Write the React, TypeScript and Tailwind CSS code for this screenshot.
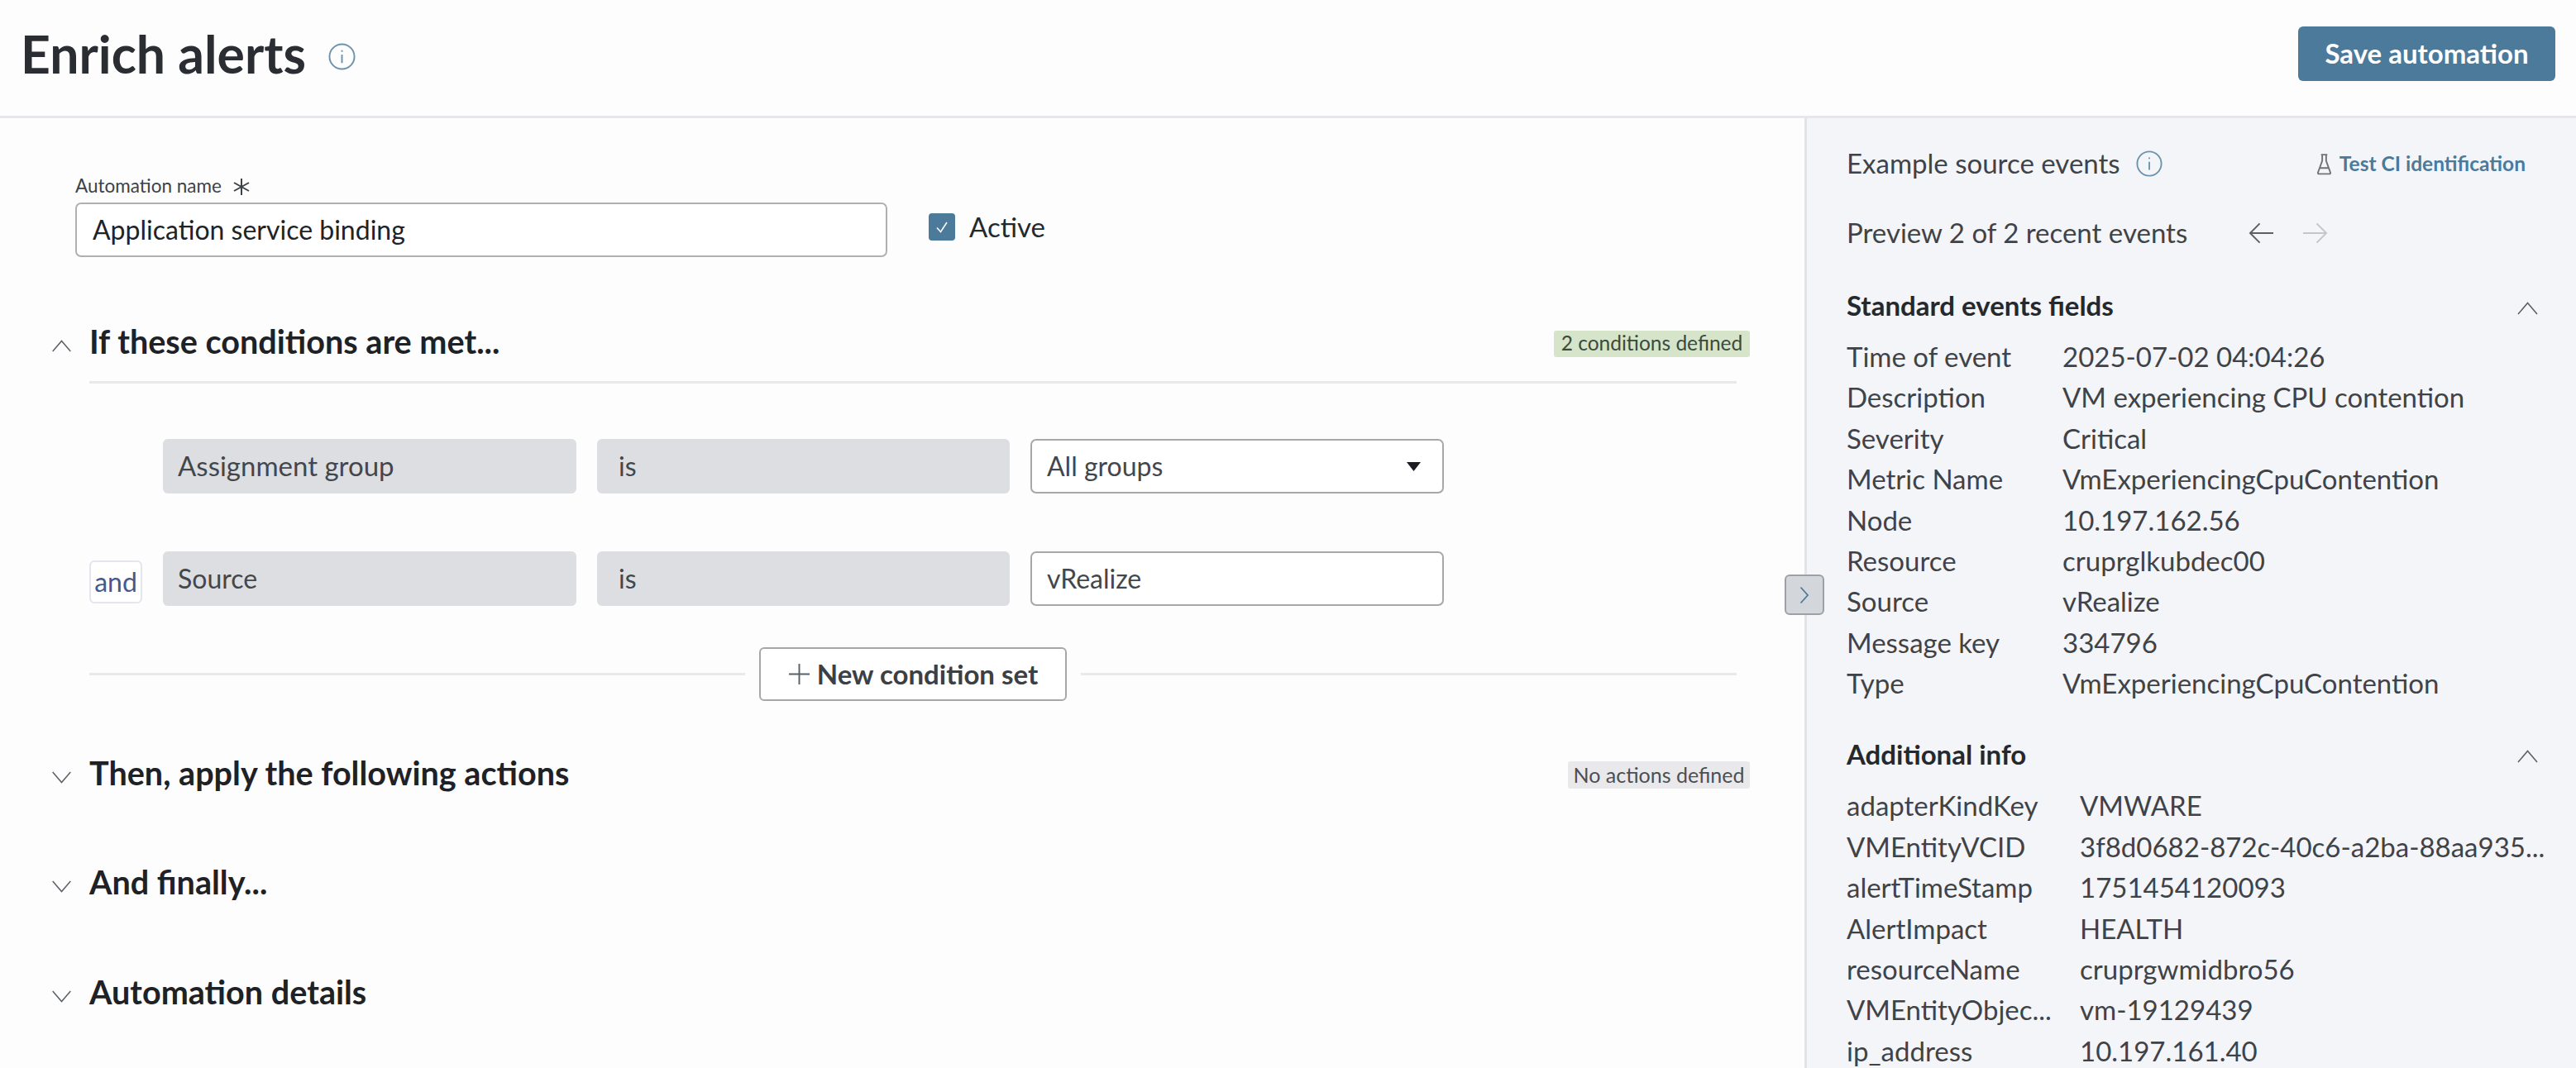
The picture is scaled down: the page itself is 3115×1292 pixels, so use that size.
import React from 'react'

const standardFields = [
  ['Time of event', '2025-07-02 04:04:26'],
  ['Description', 'VM experiencing CPU contention'],
  ['Severity', 'Critical'],
  ['Metric Name', 'VmExperiencingCpuContention'],
  ['Node', '10.197.162.56'],
  ['Resource', 'cruprglkubdec00'],
  ['Source', 'vRealize'],
  ['Message key', '334796'],
  ['Type', 'VmExperiencingCpuContention'],
]

const additionalInfo = [
  ['adapterKindKey', 'VMWARE'],
  ['VMEntityVCID', '3f8d0682-872c-40c6-a2ba-88aa935...'],
  ['alertTimeStamp', '1751454120093'],
  ['AlertImpact', 'HEALTH'],
  ['resourceName', 'cruprgwmidbro56'],
  ['VMEntityObjec...', 'vm-19129439'],
  ['ip_address', '10.197.161.40'],
]

function Chevron({ up, className }: { up?: boolean; className: string }) {
  return (
    <svg viewBox="0 0 26 16" fill="none" stroke="currentColor" strokeWidth="1.6" className={className}>
      <path d={up ? 'M1.5 15 L13 1.5 L24.5 15' : 'M1.5 1 L13 14.5 L24.5 1'} />
    </svg>
  )
}

function InfoIcon({ className }: { className: string }) {
  return (
    <svg viewBox="0 0 34 34" fill="none" stroke="currentColor" strokeWidth="2" className={className}>
      <circle cx="17" cy="17" r="15.5" />
      <path d="M17 14.5 V25" />
      <path d="M17 9 V11" />
    </svg>
  )
}

function SectionHeader({ title, open, badge }: { title: string; open?: boolean; badge?: React.ReactNode }) {
  return (
    <div className="flex h-[60px] items-center">
      <Chevron up={open} className="mt-[10px] h-[15px] w-[25px] text-[#5b6066]" />
      <h2 className="ml-[21px] text-[39.6px] leading-[60px] font-bold text-[#1e2226]">{title}</h2>
      <div className="ml-auto mt-[5px]">{badge}</div>
    </div>
  )
}

function FieldRow({ label, value, valueWidth }: { label: string; value: string; valueWidth: string }) {
  return (
    <div className="flex h-[49.4px] items-center">
      <span className={valueWidth}>{label}</span>
      <span className="whitespace-nowrap">{value}</span>
    </div>
  )
}

function PanelHeading({ title }: { title: string }) {
  return (
    <div className="flex items-center justify-between pr-[45px]">
      <h3 className="text-[33px] leading-[45px] font-bold text-[#25292d]">{title}</h3>
      <Chevron up className="mt-[6px] h-[16px] w-[27px] text-[#5b6066]" />
    </div>
  )
}

export default function App() {
  return (
    <div className="flex h-[1292px] w-[3115px] flex-col overflow-hidden bg-[#fdfdfd] font-[Lato,sans-serif]">
      <header className="flex h-[143px] shrink-0 items-center border-b-[3px] border-[#e6e7ea] pb-[10px] pl-[25px] pr-[25px]">
        <h1 className="text-[62.5px] leading-[80px] font-bold text-[#2a2e33]">Enrich alerts</h1>
        <InfoIcon className="ml-[27px] mt-[6px] h-[33px] w-[33px] text-[#6b93ad]" />
        <button className="ml-auto h-[66px] w-[311px] rounded-[6px] bg-[#4b7a9b] text-[33px] font-bold text-white">
          Save automation
        </button>
      </header>

      <div className="flex min-h-0 flex-1">
        <main className="flex-1 pl-[62px] pr-[66px]">
          <div className="ml-[29px] mt-[68px] flex">
            <div>
              <label className="flex h-[28px] items-center text-[22.5px] leading-[28px] text-[#3d4247]">
                Automation name
                <svg viewBox="0 0 22 22" fill="none" stroke="#3d4247" strokeWidth="2" className="ml-[13px] mt-[2px] h-[22px] w-[22px]">
                  <path d="M11 1 V21 M2 6 L20 16 M20 6 L2 16" />
                </svg>
              </label>
              <div className="mt-[6px] flex h-[66px] w-[982px] items-center rounded-[7px] border-2 border-[#aeb0b4] bg-white pl-[19px] text-[32px] text-[#1d2327]">
                Application service binding
              </div>
            </div>
            <div className="ml-[50px] mt-[47px] flex h-[33px] items-center">
              <span className="flex h-[33px] w-[32px] items-center justify-center rounded-[4px] bg-[#4b7a9b]">
                <svg viewBox="0 0 20 20" fill="none" stroke="white" strokeWidth="1.6" className="h-[20px] w-[20px]">
                  <path d="M4 10.5 L8.5 15.5 L16 4" />
                </svg>
              </span>
              <span className="ml-[17px] text-[33px] text-[#24292d]">Active</span>
            </div>
          </div>

          <div className="mt-[72px]">
            <SectionHeader
              title="If these conditions are met..."
              open
              badge={
                <span className="flex h-[32px] w-[237px] items-center justify-center rounded-[3px] bg-[#d6e4c9] text-[24.5px] text-[#3c4a3c]">
                  2 conditions defined
                </span>
              }
            />
            <div className="ml-[46px] mr-[16px] mt-[18px] border-t-[3px] border-[#e8e9ec]" />
          </div>

          <div className="ml-[46px] mt-[67px] flex flex-col gap-[70px] text-[32px] text-[#43474c]">
            <div className="flex gap-[25px] pl-[89px]">
              <div className="flex h-[66px] w-[500px] items-center rounded-[6px] bg-[#dddee1] pl-[18px] text-[33px]">Assignment group</div>
              <div className="flex h-[66px] w-[499px] items-center rounded-[6px] bg-[#dddee1] pl-[26px]">is</div>
              <div className="flex h-[66px] w-[500px] items-center justify-between rounded-[7px] border-2 border-[#a5a7ab] bg-white pl-[18px] pr-[26px]">
                All groups
                <svg viewBox="0 0 17 11" className="h-[11px] w-[17px]"><path d="M0 0 H17 L8.5 11 Z" fill="#1b1d20" /></svg>
              </div>
            </div>
            <div className="flex h-[66px] items-center gap-[25px]">
              <span className="mt-[8px] flex h-[52px] w-[64px] items-center justify-center rounded-[6px] border-2 border-[#e4e5ee] bg-white text-[32px] text-[#45598f]">and</span>
              <div className="flex h-[66px] w-[500px] items-center rounded-[6px] bg-[#dddee1] pl-[18px]">Source</div>
              <div className="flex h-[66px] w-[499px] items-center rounded-[6px] bg-[#dddee1] pl-[26px]">is</div>
              <div className="flex h-[66px] w-[500px] items-center rounded-[7px] border-2 border-[#a5a7ab] bg-white pl-[18px]">vRealize</div>
            </div>
          </div>

          <div className="ml-[46px] mr-[16px] mt-[50px] flex items-center gap-[17px]">
            <div className="h-[3px] flex-1 bg-[#e8e9ec]" />
            <button className="flex h-[65px] w-[372px] items-center justify-center rounded-[6px] border-2 border-[#a5a7ab] bg-white text-[33px] font-bold text-[#3b4045]">
              <svg viewBox="0 0 28 28" fill="none" stroke="#5b6066" strokeWidth="2" className="mr-[8px] h-[27px] w-[27px]">
                <path d="M14 1 V27 M1 14 H27" />
              </svg>
              New condition set
            </button>
            <div className="h-[3px] flex-1 bg-[#e8e9ec]" />
          </div>

          <div className="mt-[57px]">
            <SectionHeader
              title="Then, apply the following actions"
              badge={
                <span className="flex h-[33px] w-[220px] items-center justify-center rounded-[3px] bg-[#e9e9eb] text-[25px] text-[#4b4f54]">
                  No actions defined
                </span>
              }
            />
          </div>
          <div className="mt-[72px]">
            <SectionHeader title="And finally..." />
          </div>
          <div className="mt-[73px]">
            <SectionHeader title="Automation details" />
          </div>
        </main>

        <aside className="relative w-[933px] shrink-0 border-l-[3px] border-[#e3e4e8] bg-[#f4f5f9] pl-[48px] text-[33px] text-[#3f4347]">
          <button className="absolute left-[-27px] top-[552px] flex h-[49px] w-[48px] items-center justify-center rounded-[6px] border-2 border-[#9da1a7] bg-[#d3d6db]">
            <svg viewBox="0 0 12 22" fill="none" stroke="#4b7a9b" strokeWidth="1.8" className="h-[22px] w-[12px]">
              <path d="M1.5 1.5 L10 11 L1.5 20.5" />
            </svg>
          </button>

          <div className="mt-[35px] flex h-[40px] items-center pr-[61px]">
            <span>Example source events</span>
            <InfoIcon className="ml-[19px] h-[32px] w-[32px] text-[#6b93ad]" />
            <span className="ml-auto flex items-center text-[24.5px] font-bold text-[#4b7a9b]">
              <svg viewBox="0 0 20 28" fill="none" stroke="#6d7378" strokeWidth="2" className="mr-[9px] h-[27px] w-[19px]">
                <path d="M6 2 H14 M7.5 2 V10 L2 25 Q1.8 26.5 3.5 26.5 H16.5 Q18.2 26.5 18 25 L12.5 10 V2 M4 19 H16" />
              </svg>
              Test CI identification
            </span>
          </div>

          <div className="mt-[44px] flex h-[40px] items-center">
            <span>Preview 2 of 2 recent events</span>
            <svg viewBox="0 0 32 28" fill="none" stroke="#5b6066" strokeWidth="2" className="ml-[74px] h-[28px] w-[31px]">
              <path d="M31 14 H2 M14 2 L2 14 L14 26" />
            </svg>
            <svg viewBox="0 0 32 28" fill="none" stroke="#c4c6ca" strokeWidth="2" className="ml-[34px] h-[28px] w-[31px]">
              <path d="M1 14 H30 M18 2 L30 14 L18 26" />
            </svg>
          </div>

          <div className="mt-[45px]">
            <PanelHeading title="Standard events fields" />
          </div>
          <div className="mt-[15px]">
            {standardFields.map(([label, value]) => (
              <FieldRow key={label} label={label} value={value} valueWidth="w-[261px]" />
            ))}
          </div>

          <div className="mt-[38px]">
            <PanelHeading title="Additional info" />
          </div>
          <div className="mt-[16px]">
            {additionalInfo.map(([label, value]) => (
              <FieldRow key={label} label={label} value={value} valueWidth="w-[282px]" />
            ))}
          </div>
        </aside>
      </div>
    </div>
  )
}
